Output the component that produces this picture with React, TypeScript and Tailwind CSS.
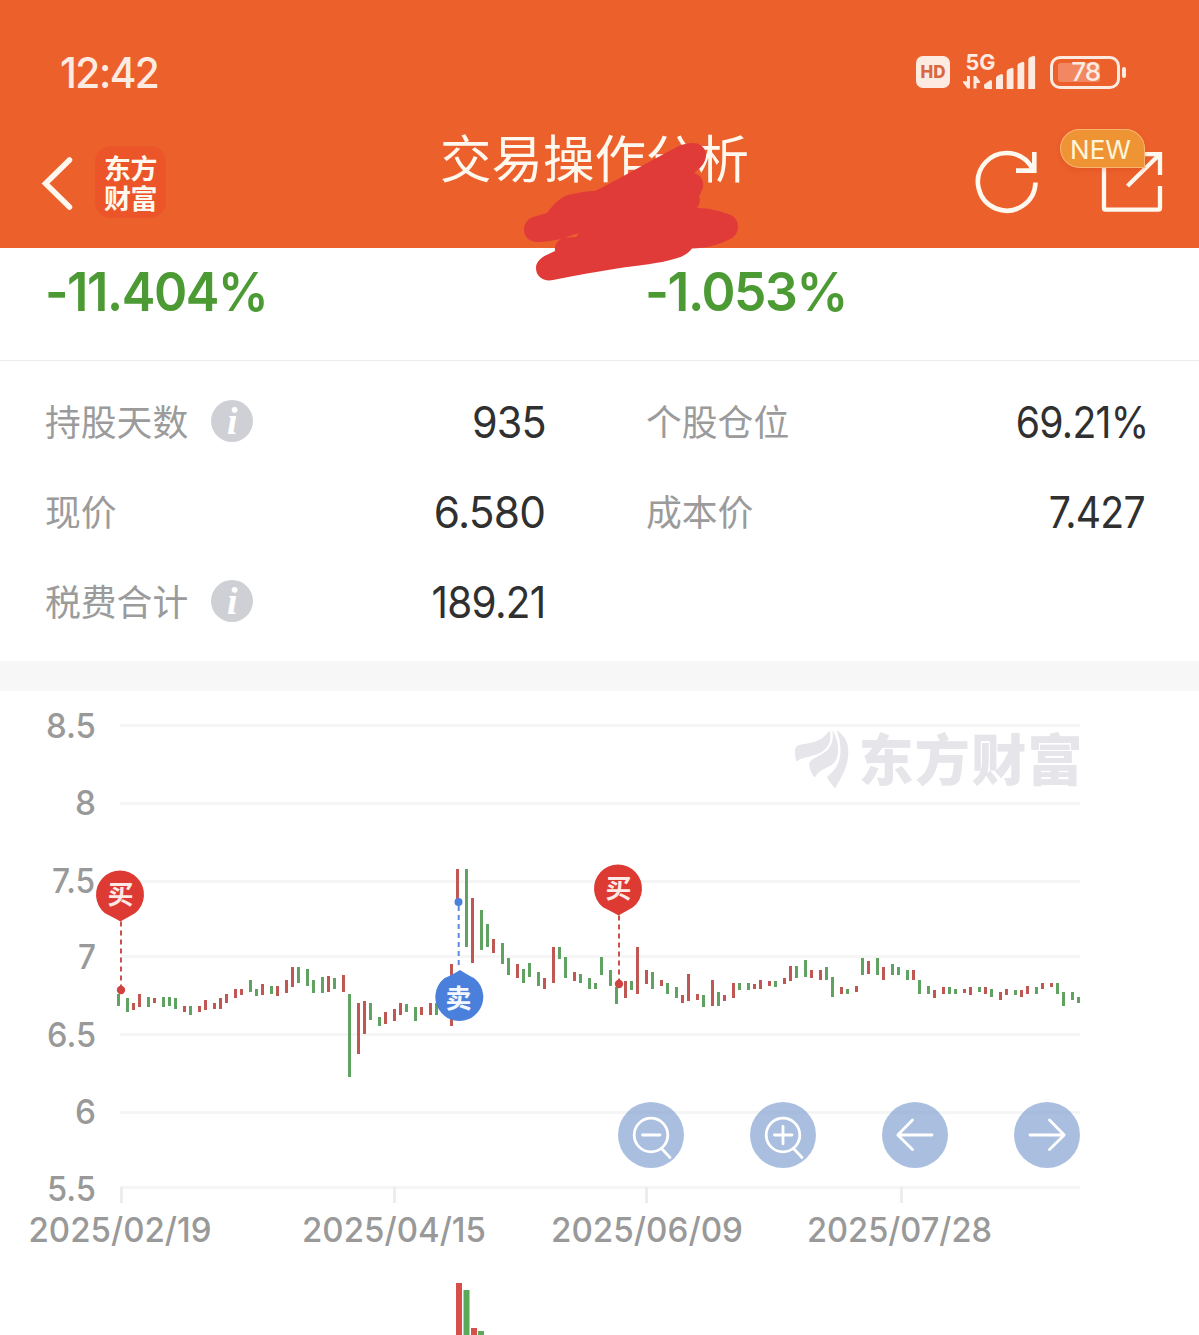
import React from "react"

type Candle = [x: number, top: number, bottom: number, dir: "r" | "g"]

// Daily bars: left edge, high, low, direction
const CANDLES: Candle[] = [
  [117, 994, 1006, "g"], [126, 998, 1012, "g"], [132, 1003, 1010, "r"], [138, 994, 1007, "r"],
  [147, 997, 1007, "g"], [153, 998, 1003, "r"], [162, 997, 1007, "g"], [168, 997, 1006, "g"],
  [174, 998, 1009, "g"], [183, 1006, 1012, "r"], [189, 1006, 1015, "g"], [198, 1006, 1012, "r"],
  [204, 1000, 1010, "r"], [213, 1003, 1009, "r"], [219, 998, 1009, "r"], [225, 994, 1003, "r"],
  [234, 989, 998, "r"], [240, 989, 995, "r"], [249, 980, 992, "g"], [255, 989, 996, "g"],
  [261, 984, 995, "r"], [270, 986, 994, "g"], [276, 986, 996, "r"], [285, 980, 993, "r"],
  [291, 967, 987, "r"], [297, 967, 983, "g"], [306, 969, 986, "g"], [312, 980, 993, "g"],
  [321, 977, 993, "g"], [327, 976, 992, "r"], [333, 978, 989, "g"], [342, 975, 992, "r"],
  [348, 994, 1077, "g"], [357, 1003, 1054, "r"], [363, 1001, 1034, "r"], [369, 1003, 1020, "g"],
  [378, 1017, 1026, "g"], [384, 1012, 1024, "r"], [393, 1009, 1021, "r"], [399, 1003, 1015, "r"],
  [405, 1004, 1012, "g"], [414, 1007, 1021, "g"], [420, 1007, 1015, "r"], [429, 1003, 1015, "r"],
  [435, 1003, 1015, "g"], [450, 964, 1026, "r"], [456, 869, 902, "r"], [465, 869, 947, "g"],
  [471, 898, 963, "r"], [480, 910, 950, "g"], [486, 924, 947, "g"], [492, 939, 953, "r"],
  [501, 943, 964, "g"], [507, 958, 975, "g"], [516, 964, 978, "r"], [522, 969, 983, "g"],
  [528, 963, 977, "g"], [537, 972, 986, "g"], [543, 978, 989, "r"], [552, 947, 983, "r"],
  [558, 947, 959, "g"], [564, 957, 978, "g"], [573, 972, 981, "r"], [579, 974, 983, "g"],
  [588, 978, 989, "g"], [594, 983, 989, "g"], [600, 957, 975, "g"], [609, 970, 986, "g"],
  [615, 987, 1004, "g"], [624, 981, 998, "r"], [630, 981, 990, "g"], [636, 947, 994, "r"],
  [645, 970, 984, "r"], [651, 972, 989, "g"], [660, 980, 986, "r"], [666, 983, 994, "g"],
  [675, 987, 998, "g"], [681, 995, 1003, "r"], [687, 974, 1001, "r"], [696, 994, 1000, "r"],
  [702, 995, 1007, "g"], [711, 980, 1006, "r"], [717, 992, 1006, "g"], [723, 995, 1001, "r"],
  [732, 983, 998, "r"], [738, 983, 990, "g"], [747, 983, 990, "g"], [753, 984, 989, "r"],
  [759, 980, 989, "r"], [768, 981, 986, "r"], [774, 981, 987, "g"], [783, 978, 984, "r"],
  [789, 966, 981, "r"], [795, 966, 978, "g"], [804, 960, 977, "g"], [810, 970, 978, "r"],
  [819, 970, 980, "r"], [825, 967, 980, "g"], [831, 977, 997, "g"], [840, 987, 994, "r"],
  [846, 989, 994, "g"], [855, 986, 992, "r"], [861, 958, 975, "g"], [867, 961, 974, "r"],
  [876, 958, 975, "g"], [882, 967, 980, "r"], [891, 964, 975, "g"], [897, 967, 975, "g"],
  [906, 970, 980, "g"], [912, 970, 980, "r"], [918, 980, 994, "g"], [927, 986, 994, "g"],
  [933, 990, 998, "r"], [942, 987, 994, "r"], [948, 987, 994, "g"], [954, 989, 994, "g"],
  [963, 989, 993, "r"], [969, 987, 995, "r"], [978, 987, 992, "g"], [984, 987, 994, "r"],
  [990, 989, 997, "g"], [999, 992, 1000, "r"], [1005, 989, 995, "r"], [1014, 990, 995, "g"],
  [1020, 990, 997, "r"], [1026, 986, 994, "r"], [1035, 987, 994, "g"], [1041, 983, 989, "r"],
  [1050, 983, 987, "r"], [1056, 983, 994, "g"], [1062, 992, 1006, "g"], [1071, 992, 1000, "g"],
  [1077, 997, 1003, "g"],
]

const Y_AXIS = [
  { label: "8.5", y: 724, base: 738, x: 46, w: 50 },
  { label: "8", y: 802, base: 815, x: 75, w: 21 },
  { label: "7.5", y: 880, base: 892.5, x: 52, w: 43 },
  { label: "7", y: 955, base: 969, x: 78, w: 18 },
  { label: "6.5", y: 1033, base: 1047, x: 47, w: 49 },
  { label: "6", y: 1111, base: 1124, x: 75, w: 21 },
  { label: "5.5", y: 1186, base: 1201, x: 47, w: 49 },
]

const X_AXIS = [
  { label: "2025/02/19", tick: 120, x: 28.5, w: 183 },
  { label: "2025/04/15", tick: 393, x: 302, w: 184 },
  { label: "2025/06/09", tick: 645, x: 551, w: 192 },
  { label: "2025/07/28", tick: 900, x: 807, w: 185 },
]

const VOLUMES = [
  { x: 456, y: 1283, dir: "r" },
  { x: 463.5, y: 1290, dir: "g" },
  { x: 471, y: 1328, dir: "r" },
  { x: 478, y: 1331, dir: "g" },
]

const StatusBar = () => (
  <div className="flex h-[144px] items-center justify-between pl-[60px] pr-[73px] text-[#fdebe2]">
    <span className="origin-left scale-x-[0.945] text-[43px] font-medium leading-none tracking-[-1.6px]">12:42</span>
    <div className="flex items-center">
      <span className="flex h-8 w-[34px] items-center justify-center rounded-[7px] bg-[#fdebe2] text-[17px] font-extrabold leading-none text-[#d8683f]">
        HD
      </span>
      <svg className="ml-3 h-[50px] w-[76px] overflow-visible" viewBox="962 47 76 50" fill="currentColor">
        <text x="965.5" y="70" fontSize="21.5" fontWeight="700" textLength="30" lengthAdjust="spacingAndGlyphs">5G</text>
        <path d="M967 76h3v12.500h-2.500L963 82.500v-1.300h4zM973.500 88.500v-12.500h2.600l4 5.800v1.300h-3.600v5.400z" />
        <path d="M984 87v-2.500l6.500-4.500q1.500 0 1.500 2v7h-6q-2 0-2-2z" />
        <path d="M996 78q0-1.500 1.500-2.200l4-1.800q1.500 0 1.500 1.500V89h-7z" />
        <path d="M1006.700 71.500q0-1.500 1.500-2.200l4-1.600q1.300 0 1.300 1.500V89h-6.800z" />
        <path d="M1017.500 65.500q0-1.500 1.500-2.200l4-1.600q1.300 0 1.300 1.500V89h-6.800z" />
        <path d="M1028.300 59.500q0-1.500 1.500-2.200l4-1.600q1.300 0 1.300 1.500V89h-6.800z" />
      </svg>
      <div className="ml-3 flex h-[33px] w-[70px] items-center rounded-[10px] border-[3px] border-current pl-[5px]">
        <span className="flex h-[19px] w-[42px] items-center justify-end rounded-[3px] bg-white/25 text-[26px] font-medium leading-none tracking-[-1px]">
          78
        </span>
      </div>
      <span className="ml-0.5 h-[11px] w-1 rounded-sm bg-current" />
    </div>
  </div>
)

const NavBar = () => (
  <div className="flex h-[104px] items-start text-[#fff8ef]">
    <svg className="ml-9 mt-2 h-16 w-10" viewBox="36 152 40 64" fill="none" stroke="currentColor" strokeWidth="5.500" strokeLinecap="round">
      <path d="M69.500 160L45.500 183.500L69.500 207" />
    </svg>
    <div className="ml-[19px] mt-[2px] flex h-[72px] w-[71px] flex-col items-center justify-center rounded-2xl bg-[#eb5529] pt-1.5 text-[27px] font-bold leading-[30px] tracking-[-0.5px]">
      <span>东方</span>
      <span>财富</span>
    </div>
    <h1 className="-mt-[11px] ml-[274px] w-[320px] whitespace-nowrap text-[51.500px] font-normal leading-[52px]">交易操作分析</h1>
    <svg className="ml-[209px] mt-1 h-[68px] w-[74px]" viewBox="969 148 74 68" fill="none" stroke="currentColor" strokeWidth="4.600">
      <path d="M1035.500 182.500A28.800 28.800 0 1 1 1032.500 169" />
      <path d="M1034.300 152v18.600H1016" />
    </svg>
    <div className="relative ml-[53px] h-[68px] w-[74px]">
      <svg className="mt-1 h-[68px] w-[74px]" viewBox="1096 148 74 68" fill="none" stroke="currentColor" strokeWidth="4.300">
        <path d="M1104 160v48q0 1.700 1.700 1.700h52.300q2 0 2-1.700v-22" />
        <path d="M1140 154.200h20v20.800M1159.500 154.500L1127.500 186" />
      </svg>
      <span className="absolute -left-9 -top-[15px] flex h-[39px] w-[85px] items-center justify-center rounded-full rounded-br-[3px] border border-[#f9b470] bg-[#ef9435] pr-1 pt-0.5 text-[26px] leading-none text-[#fff6da] shadow-[0_2px_5px_rgba(200,60,10,0.25)]">
        NEW
      </span>
    </div>
  </div>
)

// Freehand stroke covering the stock name
const Scribble = () => (
  <svg className="absolute left-[520px] top-[140px] h-[145px] w-[222px]" viewBox="520 140 222 145" fill="#e03b39">
    <path d="M595 191C610 184 650 161 677 147C683 144 688 143 693 143C701 143 706 149 706 155C706 163 700 168 694 173C701 175 704 181 703 187C702 191 700 194 699 196.500C701 201 699 205 697 208C709 208 719 211 728 214C735 216 738 221 738 227C738 233 734 238 728 240C719 245 706 248 692 248.500C688 254 682 257 674 259C660 263.500 639 265 617 268.500C595 272 573 276 553 280C544 282 536 277 536 268C536 259 546 255 555 251C554 243 560 238 566 237.500L576 237L579 233.500C574 234 568 237 560 239C552 241 544 242 537 242C530 242 524 237 524 230C524 224 527 219 533 217L547 213C552 206 559 198 568 195C577 193 586 191 595 191Z" />
  </svg>
)

const InfoIcon = () => (
  <span className="ml-[23px] flex h-[42px] w-[42px] items-center justify-center rounded-full bg-[#cfd0d5] pb-px font-['Liberation_Serif',serif] text-[38px] font-bold italic leading-none text-white">
    i
  </span>
)

interface StatProps {
  label: string
  value: string
  valueClass: string
  info?: boolean
}

const Stat = ({ label, value, valueClass, info }: StatProps) => (
  <div className="flex h-[90px] items-center">
    <span className="pt-[5px] text-[35.800px] font-normal leading-none text-[#9b9b9b]">{label}</span>
    {info && <InfoIcon />}
    <span className={`ml-auto origin-right pt-[3px] text-[43.500px] leading-none tracking-[-0.8px] text-[#303030] ${valueClass}`}>
      {value}
    </span>
  </div>
)

const BuyPin = ({ x, y, dotY }: { x: number; y: number; dotY: number }) => (
  <g>
    <path d={`M${x + 1} ${y + 27}V${dotY}`} stroke="#c9504b" strokeWidth="2" strokeDasharray="5 4" />
    <circle cx={x + 1} cy={dotY} r="4.200" fill="#cf4440" />
    <path
      d={`M${x + 0.5} ${y + 27}Q${x - 5} ${y + 23.8} ${x - 15} ${y + 18.7}A24 24 0 1 1 ${x + 15} ${y + 18.7}Q${x + 6} ${y + 23.8} ${x + 0.5} ${y + 27}Z`}
      fill="#dc3a33"
    />
    <text x={x + 0.5} y={y + 9.5} fontSize="26" fontWeight="600" textAnchor="middle" fill="#ffe9e6">买</text>
  </g>
)

const SellPin = () => (
  <g>
    <path d="M458.700 906V968" stroke="#5b8bdc" strokeWidth="2" strokeDasharray="5 4" />
    <circle cx="458.500" cy="902" r="4" fill="#4b80dc" />
    <path d="M460 970Q465 973.500 474.300 978.300A24 24 0 1 1 444.300 978.300Q455 973.500 460 970Z" fill="#4a80db" />
    <text x="458.500" y="1007.500" fontSize="26" fontWeight="700" textAnchor="middle" fill="#f2f6ff">卖</text>
  </g>
)

const Watermark = () => (
  <g fill="#e5e5ea">
    <path d="M795 751C795 746 798 745 803 744.300C816 742.500 824 739 829.500 730.500C832.500 741 828 749 819 753.500C811 757 802 757 796.500 761.500C795.300 758 795 755 795 751Z" />
    <path d="M832.300 730C839 741 839.500 752 836 760C831 769 820 767 815 777.500C811 773 809 768 809.300 763.500C811 758.500 818 757 825 752C832 747 834 739 832.300 730Z" />
    <path d="M836.500 730.500C845 735 848.300 743 848.300 752C848.300 768 840 779 835.200 788.500C832 785 829 781 827 777C835 770 840 764 840.500 752C840.700 743 839 736 836.500 730.500Z" />
    <text x="858.500" y="780" fontSize="55" fontWeight="900" textLength="224">东方财富</text>
  </g>
)

const PriceChart = () => (
  <svg className="block h-[644px] w-full" viewBox="0 691 1199 644">
    {Y_AXIS.map((row) => (
      <g key={row.label}>
        <rect x="120" y={row.y} width="960" height="3" fill="#f5f5f5" />
        <text x={row.x} y={row.base} fontSize="34.500" fontWeight="500" fill="#999" textLength={row.w} lengthAdjust="spacingAndGlyphs">
          {row.label}
        </text>
      </g>
    ))}
    {X_AXIS.map((col) => (
      <g key={col.label}>
        <rect x={col.tick} y="1187" width="3" height="16" fill="#ededed" />
        <text x={col.x} y="1242" fontSize="34.500" fontWeight="500" fill="#999" textLength={col.w} lengthAdjust="spacingAndGlyphs">
          {col.label}
        </text>
      </g>
    ))}
    <Watermark />
    {CANDLES.map(([x, top, bottom, dir]) => (
      <rect key={x} x={x} y={top} width="3" height={bottom - top} fill={dir === "r" ? "#bf5752" : "#5fa261"} />
    ))}
    <BuyPin x={120} y={894.5} dotY={990} />
    <BuyPin x={618} y={888.5} dotY={984} />
    <SellPin />
    {VOLUMES.map((v) => (
      <rect key={v.x} x={v.x} y={v.y} width="6" height={1335 - v.y} fill={v.dir === "r" ? "#d5504a" : "#5aaa59"} />
    ))}
  </svg>
)

const CONTROLS = [
  { name: "zoom-out", d: "M24.500 33h17.500M44.500 47.500l7.500 8", lens: true },
  { name: "zoom-in", d: "M24.500 33h17.500M33 24.300v17.500M44.500 47.500l7.500 8", lens: true },
  { name: "prev", d: "M50 33H16M30.500 18L15.800 33L30.500 47.500", lens: false },
  { name: "next", d: "M16 33H50M35.500 18L50.200 33L35.500 47.500", lens: false },
]

const ChartControls = () => (
  <div className="absolute left-[618px] top-[411px] flex gap-[66px]">
    {CONTROLS.map((c) => (
      <button key={c.name} aria-label={c.name} className="h-[66px] w-[66px] rounded-full bg-[rgba(124,157,207,0.65)]">
        <svg viewBox="0 0 66 66" fill="none" stroke="#fff" strokeWidth="2.800" strokeLinecap="round" strokeLinejoin="round">
          {c.lens && <circle cx="33" cy="33" r="16.800" />}
          <path d={c.d} />
        </svg>
      </button>
    ))}
  </div>
)

const App = () => {
  return (
    <div className="relative h-[1335px] w-[1199px] overflow-hidden bg-white font-['Inter','Noto_Sans_CJK_SC',sans-serif]">
      <header className="h-[248px] bg-[#ec602c]">
        <StatusBar />
        <NavBar />
      </header>
      <section className="grid h-[113px] grid-cols-[600px_1fr] border-b border-[#ececec] pl-[45px] pt-[17px] text-[54px] font-semibold leading-[54px] tracking-[-1.500px] text-[#4c9a33]">
        <span className="origin-left scale-x-[0.935]">-11.404%</span>
        <span className="origin-left scale-x-[0.955]">-1.053%</span>
      </section>
      <section className="grid h-[300px] auto-rows-[90px] grid-cols-2 content-start gap-x-[100px] pl-[45px] pr-[52px] pt-[15px]">
        <Stat label="持股天数" value="935" valueClass="scale-x-[0.95]" info />
        <Stat label="个股仓位" value="69.21%" valueClass="scale-x-[0.9] -mr-0.5" />
        <Stat label="现价" value="6.580" valueClass="scale-x-[0.975] mr-px" />
        <Stat label="成本价" value="7.427" valueClass="scale-x-[0.9] mr-0.5" />
        <Stat label="税费合计" value="189.21" valueClass="scale-x-[0.93] mr-px" info />
      </section>
      <div className="h-[30px] bg-[#f7f7f7]" />
      <section className="relative">
        <PriceChart />
        <ChartControls />
      </section>
      <Scribble />
    </div>
  )
}

export default App
